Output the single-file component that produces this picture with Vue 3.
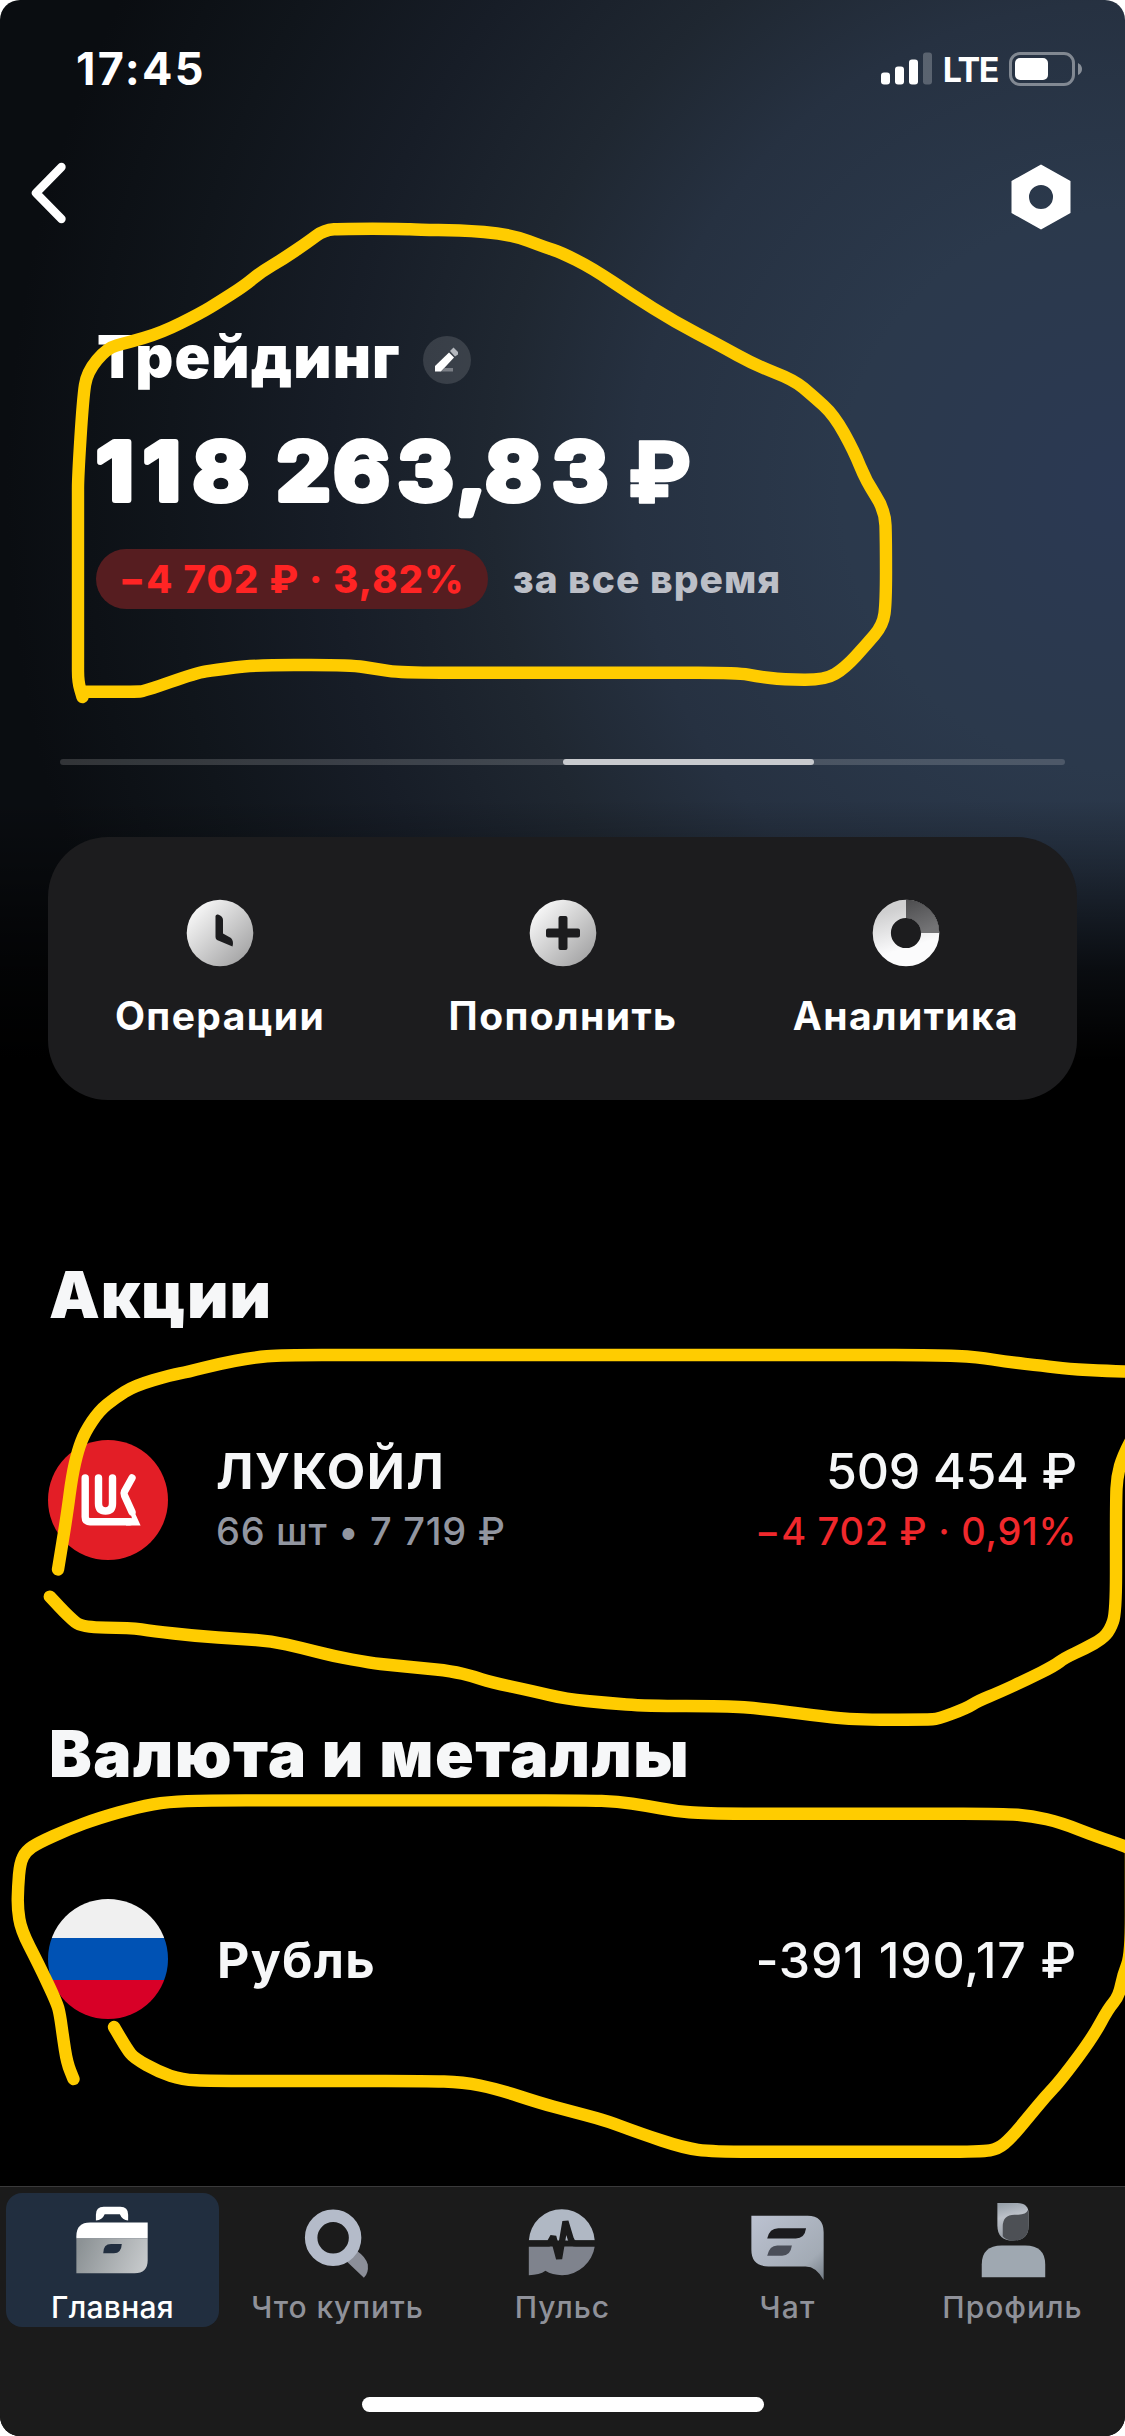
<script setup>
// Rounds the corners of a hand-drawn polyline; long edges keep their straight middle part.
function smooth(points) {
  const reach = 40
  const toward = ([x, y], [tx, ty]) => {
    const length = Math.hypot(tx - x, ty - y)
    const k = Math.min(0.5, reach / length)
    return `${(x + (tx - x) * k).toFixed(1)} ${(y + (ty - y) * k).toFixed(1)}`
  }
  const last = points.length - 1
  let d = `M${points[0][0]} ${points[0][1]}`
  for (let i = 1; i < last; i++) {
    const [x, y] = points[i]
    d += ` L${toward(points[i], points[i - 1])} Q${x} ${y} ${toward(points[i], points[i + 1])}`
  }
  return `${d} L${points[last][0]} ${points[last][1]}`
}

const marks = [
  [[82.5, 697], [78, 682], [78, 660], [78, 500], [78, 477], [83, 398], [87, 372], [107, 348], [126, 343], [161, 333], [201, 313], [219, 302], [244, 286], [261, 272], [283, 259], [308, 242], [324, 230], [344, 228.7], [401, 228.7], [419, 230], [458, 230], [510, 234], [547, 248], [560, 252], [592, 268], [632, 295], [675, 322], [719, 345], [755, 365], [794, 380], [813, 396], [834, 415], [854, 451], [866, 481], [885, 510], [886, 541], [886, 602], [883, 625], [866, 645], [845, 668], [825, 680], [783, 679.5], [758, 676.5], [738, 672.7], [560, 672.7], [401, 672.7], [376, 669], [351, 665], [254, 665], [215, 670], [197, 672.7], [144, 691.3], [136, 691.7], [83, 691.7]],
  [[58, 1569.5], [67, 1514.7], [72, 1476], [78, 1450], [85, 1432], [99, 1411], [115, 1398], [134, 1386], [172, 1374.6], [187.5, 1372], [218, 1364], [252, 1357.5], [282, 1355], [600, 1355], [935, 1355], [978, 1357], [1007, 1362], [1043, 1365.7], [1068, 1369], [1108, 1371], [1140, 1372]],
  [[1142, 1420], [1123, 1455], [1117, 1477], [1116, 1500], [1116, 1613], [1110, 1630], [1102, 1639], [1086, 1648], [1064.5, 1658], [1054, 1666], [1028, 1679], [1000, 1692], [978, 1701], [967, 1708], [938, 1719], [927, 1719.7], [852, 1719.7], [812, 1715], [762, 1708.7], [726, 1706], [646, 1706], [607, 1703], [566, 1699], [532, 1691], [490, 1682], [474, 1676.6], [451, 1671], [421, 1668], [390, 1665], [371, 1663], [333, 1656], [302, 1648], [271, 1641], [241, 1639], [195, 1636], [153, 1631], [130, 1627.6], [82, 1627.6], [69, 1617], [49.8, 1596.6]],
  [[73.5, 2079], [67, 2063], [63, 2037], [60, 2015], [57, 2003], [38, 1963], [21, 1930], [17.5, 1908], [18, 1887], [20, 1863], [26, 1851], [38, 1843], [69, 1829], [99, 1818], [138, 1807], [168, 1801.7], [206, 1800.4], [585, 1800.4], [618, 1801.4], [646, 1805.7], [675, 1811], [704, 1813.7], [1003, 1813.7], [1032, 1816], [1061, 1822.7], [1097, 1836.7], [1125, 1846], [1135, 1852]],
  [[1131, 1850], [1131, 1955], [1123, 1975], [1119, 1996], [1108, 2009], [1093, 2037], [1061, 2080], [1045, 2097], [1028.5, 2117], [1011, 2138], [998, 2149], [982, 2151.7], [712, 2151.7], [684, 2148], [639, 2133], [607, 2121], [585, 2115], [566, 2110], [540, 2103], [497, 2089], [463, 2082], [425, 2081], [210, 2081], [182, 2079.5], [159, 2072], [134, 2058], [127, 2049], [114, 2027]],
].map(smooth)

const actions = [
  { id: 'history', label: 'Операции' },
  { id: 'deposit', label: 'Пополнить' },
  { id: 'chart', label: 'Аналитика' },
]

const tabs = [
  { id: 'home', label: 'Главная', active: true, spacing: 0.3 },
  { id: 'search', label: 'Что купить', spacing: 0.9 },
  { id: 'pulse', label: 'Пульс', spacing: 1 },
  { id: 'chat', label: 'Чат', spacing: 1.2 },
  { id: 'profile', label: 'Профиль', spacing: 1 },
]
</script>

<template>
  <div class="screen">
    <header class="status">
      <span class="time">17:45</span>
      <div class="status-right">
        <svg class="signal" width="52" height="34" viewBox="0 0 52 34">
          <rect x="0" y="20.5" width="9" height="12" rx="3" fill="#fff" />
          <rect x="14" y="14.5" width="9" height="18" rx="3" fill="#fff" />
          <rect x="28" y="7.5" width="9" height="25" rx="3" fill="#fff" />
          <rect x="42" y="0.5" width="9" height="32" rx="3" fill="#fff" opacity=".24" />
        </svg>
        <span class="lte">LTE</span>
        <svg class="battery" width="74" height="34" viewBox="0 0 74 34">
          <rect x="1.5" y="1.5" width="63" height="31" rx="9.5" fill="none" stroke="#fff" stroke-opacity=".42" stroke-width="3" />
          <rect x="6" y="6" width="33" height="22" rx="5" fill="#fff" />
          <path d="M69 11 Q73 13 73 17 T69 23Z" fill="#fff" fill-opacity=".45" />
        </svg>
      </div>
    </header>

    <nav class="nav">
      <svg width="44" height="64" viewBox="0 0 44 64">
        <path d="M35.500 6 L10 32 L35.500 58" fill="none" stroke="#fff" stroke-width="8.400" stroke-linecap="round" stroke-linejoin="round" />
      </svg>
      <svg width="60" height="66" viewBox="0 0 60 66">
        <path fill="#fff" fill-rule="evenodd" d="M30 .5 59.5 17V49L30 65.5.5 49V17ZM30 21a12 12 0 1 0 0 24 12 12 0 0 0 0-24Z" />
      </svg>
    </nav>

    <section class="account">
      <div class="title-row">
        <h1>Трейдинг</h1>
        <span class="edit">
          <svg width="48" height="48" viewBox="0 0 48 48">
            <path d="M12 35.500V30L26 16.500 31 21.500 18 35.500Z" fill="#fff" />
            <path d="M27 15 30.500 11.500 35 16V18.500L32 20.500Z" fill="#b4b7bd" />
            <path d="M18 35.500 21.500 32H30V35.500Z" fill="#7b7f86" />
          </svg>
        </span>
      </div>
      <svg class="amount" width="620" height="120" viewBox="0 0 620 120">
        <text transform="scale(1.08 1)" x="0.500 44 89.500 140 167 220 279.500 334 360.500 422.500" y="89">118 263,83</text>
        <text class="currency" x="531" y="92">₽</text>
      </svg>
      <div class="change-row">
        <span class="pill">−4 702 ₽ · 3,82%</span>
        <span class="period">за все время</span>
      </div>
    </section>

    <div class="pager"><i></i></div>

    <section class="card">
      <div v-for="a in actions" :key="a.id" class="action">
        <svg width="68" height="68" viewBox="0 0 68 68">
          <defs>
            <linearGradient id="silver" x1="0" y1="0" x2="1" y2="1">
              <stop offset=".1" stop-color="#fafafa" />
              <stop offset="1" stop-color="#989899" />
            </linearGradient>
            <linearGradient id="ring" x1=".3" y1="0" x2=".6" y2="1">
              <stop offset="0" stop-color="#cfcfd0" />
              <stop offset=".8" stop-color="#fbfbfc" />
            </linearGradient>
            <linearGradient id="quarter" x1="0" y1="0" x2=".4" y2="1">
              <stop offset="0" stop-color="#4c4c4e" />
              <stop offset="1" stop-color="#737375" />
            </linearGradient>
          </defs>
          <template v-if="a.id === 'history'">
            <circle cx="34" cy="34" r="33.300" fill="url(#silver)" />
            <path d="M29.500 17 Q30 15 32 15.500 Q37 17 37 21 V34.500 L45 39 Q48 42 46.500 47.500 L31 41 Q29.500 40 29.500 38Z" fill="#1c1c1e" />
          </template>
          <template v-else-if="a.id === 'deposit'">
            <circle cx="34" cy="34" r="33.300" fill="url(#silver)" />
            <path d="M29.500 19 Q29.500 17 31.500 17 H36.500 Q38.500 17 38.500 19 V29.500 H49 Q51 29.500 51 31.500 V36.500 Q51 38.500 49 38.500 H38.500 V49 Q38.500 51 36.500 51 H31.500 Q29.500 51 29.500 49 V38.500 H19 Q17 38.500 17 36.500 V31.500 Q17 29.500 19 29.500 H29.500Z" fill="#1c1c1e" />
          </template>
          <template v-else>
            <circle cx="34" cy="34" r="24.200" fill="none" stroke="url(#ring)" stroke-width="18.200" />
            <path d="M34 .7 A33.300 33.300 0 0 1 67.300 34 H49 A15 15 0 0 0 34 19Z" fill="#1c1c1e" />
            <path d="M34 .7 A33.300 33.300 0 0 1 67.300 34 H49 A15 15 0 0 0 34 19Z" fill="url(#quarter)" />
          </template>
        </svg>
        <span>{{ a.label }}</span>
      </div>
    </section>

    <section class="group first">
      <h2 class="short">Акции</h2>
      <div class="row">
        <svg width="120" height="120" viewBox="0 0 120 120">
          <circle cx="60" cy="60" r="60" fill="#e31e26" />
          <g fill="none" stroke="#fff" stroke-width="7.400" stroke-linecap="round">
            <path d="M37.200 38 V77 Q37.200 81.700 42 81.700 H82" />
            <path d="M50.500 38 V63.500 Q50.500 71 57.500 71 T64.500 63.500 V38" />
            <path d="M84 38 L76.500 51.500 Q75.500 53.500 76.500 55.500 L84 72" stroke-linejoin="round" />
          </g>
          <path d="M80.500 66 86.500 72 92.600 85.400H78V78.500H84Z" fill="#fff" />
        </svg>
        <div class="info">
          <span class="name lukoil">ЛУКОЙЛ</span>
          <span class="sub">66 шт • 7 719 ₽</span>
        </div>
        <div class="info right">
          <span class="value">509 454 ₽</span>
          <span class="sub loss">−4 702 ₽ · 0,91%</span>
        </div>
      </div>
    </section>

    <section class="group">
      <h2>Валюта и металлы</h2>
      <div class="row">
        <div class="flag"></div>
        <div class="info">
          <span class="name">Рубль</span>
        </div>
        <div class="info right">
          <span class="value ruble">-391 190,17 ₽</span>
        </div>
      </div>
    </section>

    <footer class="tabbar">
      <div class="tabs">
        <div v-for="t in tabs" :key="t.id" class="tab" :class="{ active: t.active }">
          <svg width="80" height="86" viewBox="0 0 80 86">
            <defs>
              <linearGradient id="case" x1="0" y1=".4" x2="1" y2=".6">
                <stop offset="0" stop-color="#8c9295" />
                <stop offset="1" stop-color="#c6c9cb" />
              </linearGradient>
              <linearGradient id="steel" x1="0" y1="0" x2="1" y2="1">
                <stop offset="0" stop-color="#bcc2d1" />
                <stop offset=".75" stop-color="#a3abb5" />
                <stop offset="1" stop-color="#747d86" />
              </linearGradient>
              <linearGradient id="head" x1=".3" y1="0" x2=".5" y2="1">
                <stop offset="0" stop-color="#98a1aa" />
                <stop offset=".35" stop-color="#bcc1c9" />
                <stop offset="1" stop-color="#8e959d" />
              </linearGradient>
            </defs>
            <template v-if="t.id === 'home'">
              <path d="M2.500 39.500 V37 Q2.500 23 16.500 23 H75.500 V39.500Z" fill="#fff" />
              <path d="M2.500 39.500 H75.500 V62 Q75.500 75 62 75 H2.500Z" fill="url(#case)" />
              <path d="M22.500 21 V15 Q22.500 7 30.500 7 H47.500 Q55.500 7 55.500 15 V21 Q49.500 20.500 47 14.500 H31.500 Q29 20.500 22.500 21Z" fill="#fff" />
              <path d="M30 54.500 Q30 45 38 45 H49 Q48.500 54.500 41 54.500Z" fill="#212e3f" />
            </template>
            <template v-else-if="t.id === 'search'">
              <path d="M58 50 L60.500 53 Q68 58 70.500 66 Q71.500 75 66.500 79.500 L49 63Z" fill="#8c8f99" />
              <circle cx="35" cy="38.700" r="22.500" fill="none" stroke="#b4bbc9" stroke-width="12.800" />
            </template>
            <template v-else-if="t.id === 'pulse'">
              <path d="M5 41.500 A33.800 34 0 0 1 72.500 41.500Z" fill="#b0b8c4" />
              <path d="M5 47.500 H72.500 A34.500 34.500 0 0 1 39 77 Q29 77 22 72.500 Q16 77 5 77Z" fill="#7f838d" />
              <path d="M3 44.500 H26 L30 37.500 L36 60 L42.500 22 L48 40 Q49.500 44.500 53 44.500 H75" fill="none" stroke="#1b1b1b" stroke-width="6.400" stroke-linejoin="bevel" />
            </template>
            <template v-else-if="t.id === 'chat'">
              <path d="M2.500 16 H60 Q76.500 16 76.500 33 V82 Q69 68 58 68 H20 Q2.500 68 2.500 51Z" fill="url(#steel)" />
              <path d="M18.700 39.500 Q21 29 30 29 H58.500 Q57 39.500 48 39.500Z" fill="#1b1b1e" />
              <path d="M18.700 57 Q21 46.500 29 46.500 H44 Q42.500 57 34 57Z" fill="#4a4e58" />
            </template>
            <template v-else>
              <path d="M24 3 H44.500 Q56 3 56 14 V26 Q56 41.500 40 41.500 Q24 41.500 24 26Z" fill="url(#head)" />
              <path d="M29.500 37 V27 Q29.500 15 41.500 15 H45.500 Q53.500 15 55.500 10 L56 14 V26 Q56 41.500 40 41.500 Q33.500 41.500 29.500 37Z" fill="#4d5055" />
              <path d="M8 79 V66 Q8 46.500 28.500 46.500 H52.500 Q73 46.500 73 66 V79Z" fill="#9fa8b1" />
            </template>
          </svg>
          <span :style="{ letterSpacing: t.spacing + 'px' }">{{ t.label }}</span>
        </div>
      </div>
      <div class="home-indicator"></div>
    </footer>

    <svg class="marks" width="1125" height="2436" viewBox="0 0 1125 2436">
      <path v-for="(d, i) in marks" :key="i" :d="d" />
    </svg>
  </div>
</template>

<style>
body {
  background: #fff;
}
</style>

<style scoped>
.screen {
  position: relative;
  box-sizing: border-box;
  width: 1125px;
  height: 2436px;
  display: flex;
  flex-direction: column;
  overflow: hidden;
  border-radius: 20px;
  color: #fff;
  font-family: Inter, "Liberation Sans", sans-serif;
  white-space: nowrap;
  background:
    linear-gradient(to bottom, transparent 800px, rgba(0, 0, 0, 0.28) 870px, rgba(0, 0, 0, 0.75) 970px, #000 1060px),
    radial-gradient(circle 1160px at 1120px 490px, #2b3953 0%, #2b394c 24%, #263141 42%, #1f2731 54%, #171d27 68%, #10151b 82%, #0a0d11 96%);
}

.status {
  display: flex;
  align-items: center;
  justify-content: space-between;
  height: 138px;
  padding: 0 42px 0 76px;
}
.time {
  font-size: 45px;
  font-weight: 700;
  line-height: 60px;
  letter-spacing: 2.3px;
}
.status-right {
  display: flex;
  align-items: center;
}
.lte {
  margin: 0 11px 0 10px;
  padding-top: 2px;
  font-size: 34px;
  font-weight: 700;
  line-height: 40px;
  letter-spacing: -1.4px;
}

.nav {
  display: flex;
  align-items: center;
  justify-content: space-between;
  height: 118px;
  padding: 0 54px 0 26px;
}
.nav svg:first-child {
  margin-bottom: 8px;
}

.account {
  display: flex;
  flex-direction: column;
  margin-top: 74px;
  padding-left: 96px;
}
.title-row {
  display: flex;
  align-items: center;
  height: 60px;
}
h1 {
  width: 303px;
  margin: 0 23px 7px 1px;
  font-size: 59px;
  font-weight: 900;
  line-height: 60px;
  letter-spacing: 1.1px;
}
.edit {
  width: 48px;
  height: 48px;
  border-radius: 50%;
  background: rgba(255, 255, 255, 0.13);
}
.amount {
  margin-top: 21px;
}
.amount text {
  font-family: Inter, sans-serif;
  font-size: 80px;
  font-weight: 700;
  fill: #fff;
  stroke: #fff;
  stroke-width: 6px;
  stroke-linejoin: round;
}
.amount .currency {
  font-size: 85px;
  font-weight: 800;
  stroke-width: 1.5px;
}
.change-row {
  display: flex;
  align-items: center;
  gap: 25px;
  margin-top: 18px;
}
.pill {
  box-sizing: border-box;
  width: 392px;
  height: 60px;
  padding-left: 23px;
  border-radius: 30px;
  background: #561d20;
  color: #ff2424;
  font-size: 38px;
  font-weight: 800;
  line-height: 60px;
  letter-spacing: 1.3px;
}
.period {
  color: #bcbfc7;
  font-size: 39px;
  font-weight: 800;
  line-height: 60px;
  letter-spacing: 1px;
}

.pager {
  width: 1005px;
  height: 6px;
  margin: 150px 60px 0;
  border-radius: 3px;
  background: rgba(255, 255, 255, 0.16);
}
.pager i {
  display: block;
  width: 251px;
  height: 6px;
  margin-left: 503px;
  border-radius: 3px;
  background: #c8cace;
}

.card {
  display: flex;
  height: 263px;
  margin: 72px 48px 0;
  border-radius: 60px;
  background: #1c1c1e;
}
.action {
  flex: 1;
  display: flex;
  flex-direction: column;
  align-items: center;
  padding-top: 61.5px;
}
.action span {
  margin-top: 19.5px;
  padding-left: 1px;
  font-size: 39px;
  font-weight: 700;
  line-height: 60px;
  letter-spacing: 1.4px;
}

.group {
  margin-top: 154px;
  padding: 0 48px;
}
.group.first {
  margin-top: 155px;
}
h2 {
  margin: 0;
  padding-left: 1px;
  color: #f6f7f8;
  font-size: 64px;
  font-weight: 900;
  line-height: 80px;
  letter-spacing: 1.5px;
}
h2.short {
  letter-spacing: 0.8px;
}
.row {
  display: flex;
  align-items: center;
  height: 120px;
  margin-top: 105px;
}
.info {
  display: flex;
  flex-direction: column;
  margin: 2px 0 0 48px;
}
.info.right {
  margin-left: auto;
  align-items: flex-end;
}
.name,
.value {
  color: #f6f7f8;
  font-size: 50px;
  line-height: 60px;
}
.name {
  padding-left: 1px;
  font-weight: 700;
  letter-spacing: 1.25px;
}
.name.lukoil {
  padding-left: 0;
  letter-spacing: 1.5px;
}
.value {
  font-weight: 500;
  letter-spacing: -0.3px;
}
.value.ruble {
  letter-spacing: 0.74px;
}
.sub {
  color: #9296a0;
  font-size: 38px;
  font-weight: 500;
  line-height: 60px;
  letter-spacing: 0.7px;
}
.sub.loss {
  color: #f0282c;
}
.flag {
  width: 120px;
  height: 120px;
  border-radius: 50%;
  background: linear-gradient(#f0f0f0 39px, #0052b4 39px 81px, #d80027 81px);
}

.tabbar {
  display: flex;
  flex-direction: column;
  align-items: center;
  box-sizing: border-box;
  height: 250px;
  margin-top: auto;
  border-top: 1px solid #3a3a3b;
  background: #1b1b1b;
}
.tabs {
  display: flex;
  width: 1125px;
  height: 140px;
}
.tab {
  flex: 1;
  display: flex;
  flex-direction: column;
  align-items: center;
  box-sizing: border-box;
  height: 134px;
  margin: 6px;
  padding-top: 7px;
  border-radius: 16px;
  color: #8f9199;
}
.tab.active {
  background: #212e3f;
  color: #fff;
}
.tab span {
  margin-top: 3px;
  font-size: 30px;
  font-weight: 500;
  line-height: 40px;
}
.home-indicator {
  width: 402px;
  height: 15px;
  margin-top: 70px;
  border-radius: 8px;
  background: #fff;
}

.marks {
  position: absolute;
  inset: 0;
}
.marks path {
  fill: none;
  stroke: #ffcc00;
  stroke-width: 12.4px;
  stroke-linecap: round;
  stroke-linejoin: round;
}
</style>
